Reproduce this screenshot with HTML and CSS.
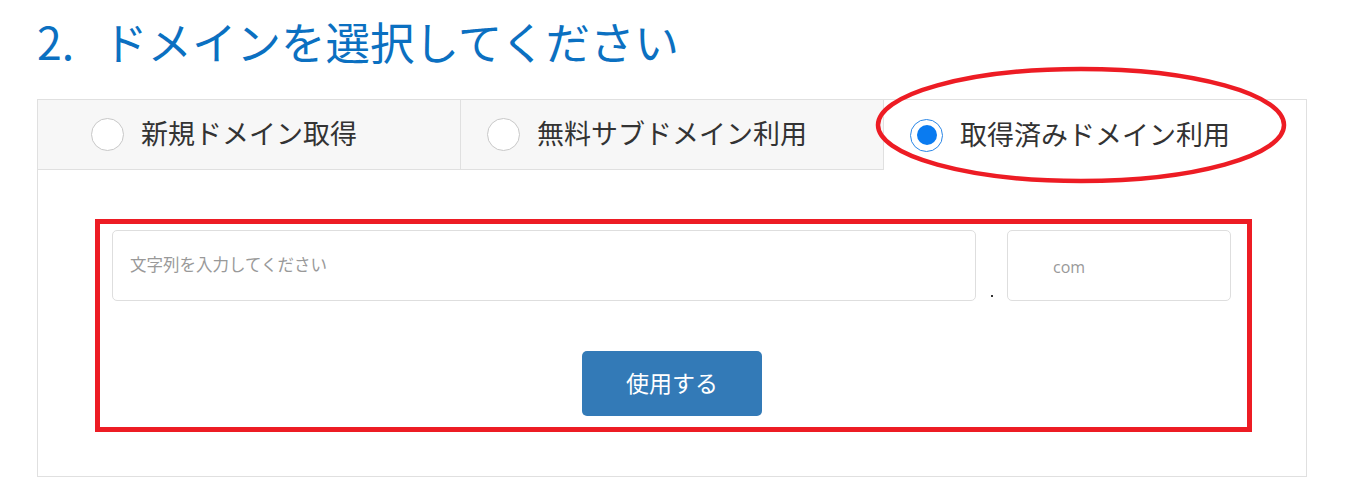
FILE: index.html
```html
<!DOCTYPE html>
<html lang="ja">
<head>
<meta charset="utf-8">
<title>ドメインを選択してください</title>
<link rel="stylesheet" href="styles.css">
</head>
<body>
<div class="page">
  <h1 class="title"><span class="num">2.</span>ドメインを選択してください</h1>
  <div class="panel">
    <div class="tabs">
      <label class="tab">
        <span class="radio"></span>
        <span class="tab-text">新規ドメイン取得</span>
      </label>
      <label class="tab">
        <span class="radio"></span>
        <span class="tab-text">無料サブドメイン利用</span>
      </label>
      <label class="tab active">
        <span class="radio checked"></span>
        <span class="tab-text">取得済みドメイン利用</span>
      </label>
    </div>
    <div class="body">
      <div class="input-row">
        <div class="field name-field"><span class="placeholder">文字列を入力してください</span></div>
        <span class="dot"></span>
        <div class="field tld-field"><span class="placeholder tld">com</span></div>
      </div>
      <div class="actions">
        <button class="btn" type="button">使用する</button>
      </div>
    </div>
  </div>
  <svg class="annotations" width="1345" height="495" viewBox="0 0 1345 495">
    <ellipse cx="1081" cy="125" rx="203" ry="56" fill="none" stroke="#ed1c24" stroke-width="4.5"/>
    <rect x="97.5" y="221.5" width="1152" height="208" fill="none" stroke="#ed1c24" stroke-width="5"/>
  </svg>
</div>
</body>
</html>
```

FILE: styles.css
```css
* { box-sizing: border-box; }

html, body {
  margin: 0;
  padding: 0;
  background: #ffffff;
}

body {
  font-family: "Noto Sans CJK JP", "Noto Sans", sans-serif;
  color: #333333;
}

.page {
  position: relative;
  width: 1345px;
  height: 495px;
  padding: 19px 39px 0 37px;
  overflow: hidden;
}

.title {
  margin: 0 0 36px 0;
  font-size: 44.5px;
  line-height: 44px;
  font-weight: 400;
  color: #0b70c1;
}

.num {
  margin-right: 29px;
}

.panel {
  width: 1270px;
  height: 378px;
  border: 1px solid #e0e0e0;
  background: #ffffff;
}

.tabs {
  display: grid;
  grid-template-columns: 423px 423px 422px;
  height: 70px;
}

.tab {
  display: flex;
  align-items: center;
  justify-content: center;
  gap: 17px;
  padding-right: 50px;
  background: #f7f7f7;
  border-bottom: 1px solid #e0e0e0;
  border-right: 1px solid #e0e0e0;
  font-size: 27px;
  color: #333333;
}

.tab.active {
  background: #ffffff;
  border-bottom: none;
  border-right: none;
}

.radio {
  width: 33px;
  height: 33px;
  border-radius: 50%;
  border: 1px solid #c8c8c8;
  background: #ffffff;
  flex: none;
  display: flex;
  align-items: center;
  justify-content: center;
}

.radio.checked {
  border: 1.5px solid #2a86e6;
}

.radio.checked::after {
  content: "";
  width: 20px;
  height: 20px;
  border-radius: 50%;
  background: #0a7bf0;
}

.tab-text {
  white-space: nowrap;
  line-height: 1;
  margin-top: -4px;
}

.body {
  padding: 60px 75px 0 74px;
}

.input-row {
  display: flex;
  align-items: stretch;
  height: 71px;
}

.field {
  border: 1px solid #dedede;
  border-radius: 5px;
  display: flex;
  align-items: center;
  background: #ffffff;
}

.name-field {
  flex: 1;
  padding-left: 17px;
}

.tld-field {
  width: 224px;
  padding-left: 45px;
}

.placeholder {
  font-size: 16.5px;
  color: #999999;
  margin-top: -3px;
}

.tld {
  font-family: "Open Sans", "Noto Sans", sans-serif;
  font-size: 16px;
  margin-top: 2px;
}

.dot {
  width: 31px;
  display: flex;
  justify-content: center;
  align-items: flex-end;
  padding-bottom: 4px;
}

.dot::before {
  content: "";
  width: 2px;
  height: 2px;
  background: #333333;
}

.actions {
  display: flex;
  justify-content: center;
  margin-top: 50px;
}

.btn {
  width: 180px;
  height: 65px;
  border: none;
  border-radius: 5px;
  background: #337ab7;
  color: #ffffff;
  font-family: "Noto Sans CJK JP", "Noto Sans", sans-serif;
  font-size: 23px;
  padding: 0 0 4px 0;
  margin-left: 1px;
}

.annotations {
  position: absolute;
  left: 0;
  top: 0;
  pointer-events: none;
}
```
